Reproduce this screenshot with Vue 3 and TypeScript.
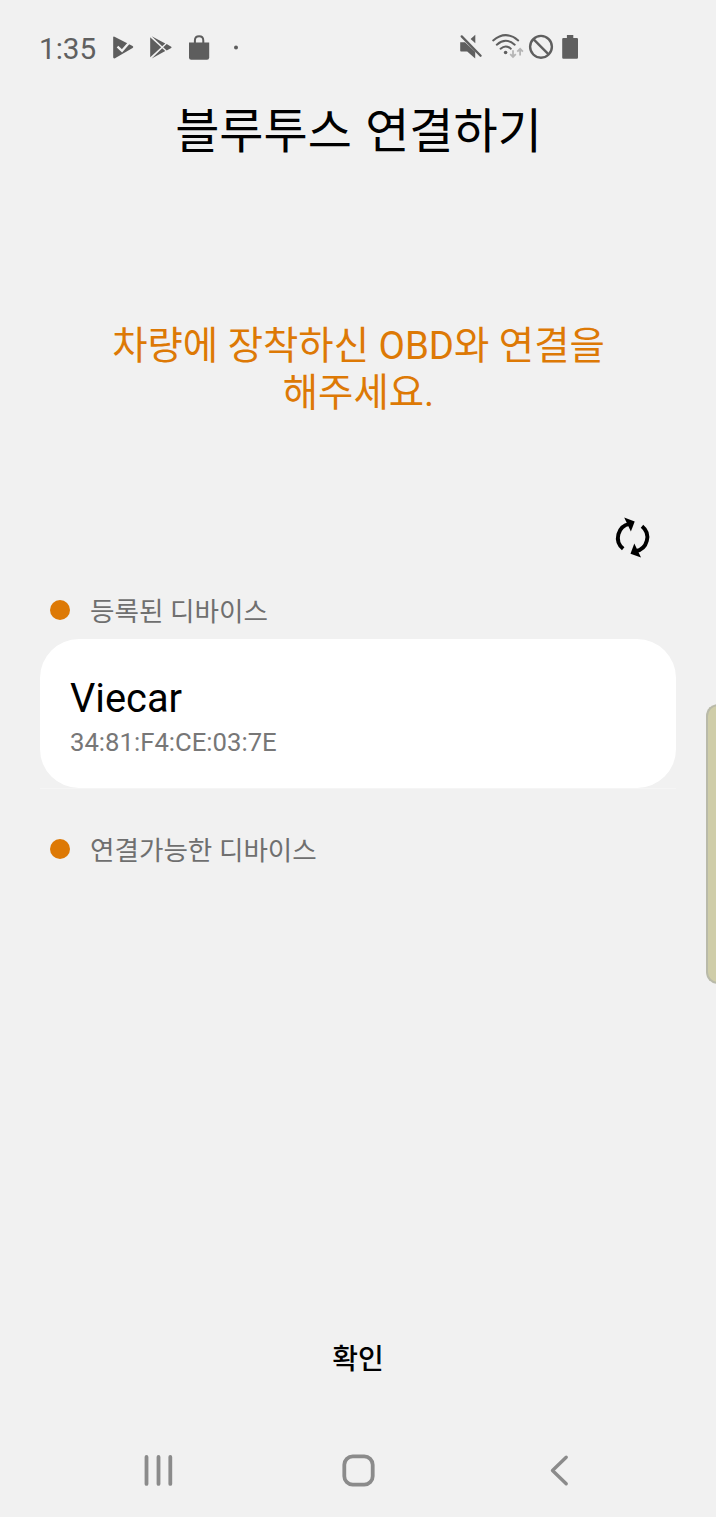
<script setup lang="ts">
interface Device {
  name: string
  address: string
}

interface DeviceSection {
  title: string
  devices: Device[]
}

const sections: DeviceSection[] = [
  { title: '등록된 디바이스', devices: [{ name: 'Viecar', address: '34:81:F4:CE:03:7E' }] },
  { title: '연결가능한 디바이스', devices: [] },
]
</script>

<template>
  <div class="screen">
    <header class="status">
      <span class="time">1:35</span>
      <svg class="notices" viewBox="106 28 140 38" fill="#5d5d5d">
        <path d="M113.2 37 Q113.2 36.2 114.5 36.7 L132.6 46 Q134 47 132.6 48 L115 58.3 Q113.2 58.8 113.2 57.3 Z" />
        <path d="M117.5 46.6 L122 50.8 L131 40.6" fill="none" stroke="#f1f1f1" stroke-width="2.3" />
        <path d="M150.2 37.3 L161.2 47.3 L150.2 57.2 Z" />
        <path d="M151.7 36.2 L165.3 43.6 L162.2 46.2 Z M151.7 58.4 L165.3 51 L162.2 48.3 Z M166.7 44.1 L171.2 46.7 Q172 47.3 171.2 47.9 L166.7 50.5 L163.2 47.3 Z" />
        <path d="M189 42.6 H209.2 V57.6 Q209.2 59.8 207 59.8 H191.2 Q189 59.8 189 57.6 Z" />
        <path d="M194.9 43 V40.4 Q194.9 36.2 199.1 36.2 Q203.3 36.2 203.3 40.4 V43" fill="none" stroke="#5d5d5d" stroke-width="2" />
        <circle cx="236" cy="47.5" r="2" />
      </svg>
      <svg class="signals" viewBox="456 28 126 38" fill="#5f5f5f">
        <path d="M460.2 42.3 H465 L475.2 51.8 V58.6 L467.2 51.4 H461 Q460.2 51.4 460.2 50.5 Z" />
        <path d="M475.3 34.7 V43.2 L470.6 39 Z" />
        <path d="M461.7 36.4 L480.6 55.7" fill="none" stroke="#5f5f5f" stroke-width="2.3" stroke-linecap="round" />
        <g fill="none" stroke="#5f5f5f" stroke-width="2" stroke-linecap="round">
          <path d="M493.2 40.4 Q505.7 29.8 518.2 40.4" />
          <path d="M496.8 44.7 Q505.7 36.9 514.7 44.7" />
          <path d="M500.6 48.7 Q505.7 44.2 510.8 48.7" />
        </g>
        <circle cx="505.6" cy="52.5" r="1.8" />
        <g fill="none" stroke="#b5b5b5" stroke-width="1.8">
          <path d="M513 50.2 V57 M510.2 54.2 L513 57 L515.8 54.2" />
          <path d="M520.1 55.4 V49 M517.3 51.6 L520.1 48.8 L522.9 51.6" />
        </g>
        <circle cx="541" cy="46.8" r="10.9" fill="none" stroke="#5f5f5f" stroke-width="2.4" />
        <path d="M533.4 39.2 L548.6 54.4" fill="none" stroke="#5f5f5f" stroke-width="2.4" />
        <path d="M566.9 35 H573.3 V37.9 H576.8 Q578 37.9 578 39 V57.4 Q578 58.7 576.8 58.7 H563.4 Q562.2 58.7 562.2 57.4 V39 Q562.2 37.9 563.4 37.9 H566.9 Z" />
      </svg>
    </header>

    <h1 class="title">블루투스 연결하기</h1>
    <p class="message">차량에 장착하신 OBD와 연결을<br />해주세요.</p>

    <main class="content">
      <button class="refresh" type="button">
        <svg viewBox="612 514 42 48">
          <path d="M623.2 548.8 A14.2 14.2 0 0 1 629.6 523.8" fill="none" stroke="#000" stroke-width="3.9" />
          <path d="M624.2 517.6 L634.7 521.4 L630.9 531.6 Z" />
          <path d="M642 526.2 A14.2 14.2 0 0 1 635.6 551.2" fill="none" stroke="#000" stroke-width="3.9" />
          <path d="M641 557.6 L630.5 553.8 L634.3 543.4 Z" />
        </svg>
      </button>

      <section v-for="section in sections" :key="section.title" class="section">
        <h2 class="label"><i class="dot"></i><span class="caption">{{ section.title }}</span></h2>
        <ul v-if="section.devices.length" class="devices">
          <li v-for="device in section.devices" :key="device.address" class="device">
            <strong class="name">{{ device.name }}</strong>
            <span class="address">{{ device.address }}</span>
          </li>
        </ul>
      </section>
    </main>

    <button class="confirm" type="button">확인</button>

    <nav class="nav">
      <svg viewBox="0 0 34 34"><path d="M5.5 3.9 V30.9 M17.5 3.9 V30.9 M29.3 3.9 V30.9" stroke-width="3.8" /></svg>
      <svg viewBox="0 0 34 34"><rect x="3.3" y="3.3" width="28.4" height="28.4" rx="8.5" stroke-width="3.8" /></svg>
      <svg viewBox="0 0 34 34"><path d="M25.2 4.3 L11.5 17.5 L25.2 30.7" stroke-width="3.4" /></svg>
    </nav>

    <div class="edge"></div>
  </div>
</template>

<style>
body {
  background: #f1f1f1;
}
</style>

<style scoped>
.screen {
  position: relative;
  display: flex;
  flex-direction: column;
  width: 716px;
  height: 1517px;
  overflow: hidden;
  background: #f1f1f1;
  color: #000;
  font-family: Roboto, "Noto Sans CJK KR", sans-serif;
}
h1, h2, p, ul {
  margin: 0;
  padding: 0;
  font-weight: 400;
}
button {
  padding: 0;
  border: 0;
  background: none;
  color: inherit;
  font-family: inherit;
}
svg {
  display: block;
}
.status {
  display: flex;
  align-items: center;
  height: 94px;
  flex: none;
  padding-left: 39px;
}
.time {
  width: 67px;
  color: #606060;
  font-size: 29.7px;
  line-height: 38px;
  padding-top: 3px;
  box-sizing: border-box;
}
.notices {
  width: 140px;
  height: 38px;
}
.signals {
  width: 126px;
  height: 38px;
  margin-left: 210px;
}
.title {
  padding-left: 1px;
  font-size: 48px;
  line-height: 76px;
  text-align: center;
  word-spacing: 1.5px;
}
.message {
  margin-top: 152px;
  padding-left: 1px;
  color: #dd7905;
  font-size: 38.4px;
  line-height: 47px;
  text-align: center;
}
.content {
  padding: 0 40px;
  margin-top: 98px;
}
.refresh {
  display: block;
  margin-left: auto;
  margin-right: 22px;
}
.refresh svg {
  width: 42px;
  height: 48px;
}
.section + .section {
  margin-top: 31px;
}
.refresh + .section {
  margin-top: 19px;
}
.label {
  display: flex;
  align-items: center;
  height: 58px;
  padding-left: 10px;
  color: #6f6f6f;
  font-size: 26.6px;
}
.caption {
  line-height: 32px;
  padding-top: 4px;
}
.dot {
  width: 20px;
  height: 20px;
  margin-right: 20px;
  border-radius: 50%;
  background: #dd7905;
}
.devices {
  list-style: none;
  border-bottom: 1px solid #f5f5f5;
}
.device {
  display: flex;
  flex-direction: column;
  box-sizing: border-box;
  height: 149px;
  padding: 36px 30px 0;
  border-radius: 39px;
  background: #fff;
}
.name {
  font-size: 39.8px;
  line-height: 48px;
  font-weight: 400;
}
.address {
  margin-top: 3px;
  color: #777;
  font-size: 25.7px;
  line-height: 32px;
}
.confirm {
  align-self: center;
  width: 180px;
  height: 80px;
  margin-top: auto;
  font-size: 28px;
  font-weight: 500;
}
.nav {
  display: flex;
  justify-content: space-between;
  align-items: center;
  flex: none;
  height: 94px;
  margin-top: 26px;
  padding: 0 141px;
}
.nav svg {
  width: 34px;
  height: 34px;
  fill: none;
  stroke: #8b8b8b;
  stroke-linecap: round;
  stroke-linejoin: round;
}
.edge {
  position: absolute;
  top: 704px;
  right: -2px;
  width: 12px;
  height: 280px;
  box-sizing: border-box;
  border: 2px solid #b9baa9;
  border-right: 0;
  border-radius: 12px 0 0 12px;
  background: #cfcda9;
}
</style>
